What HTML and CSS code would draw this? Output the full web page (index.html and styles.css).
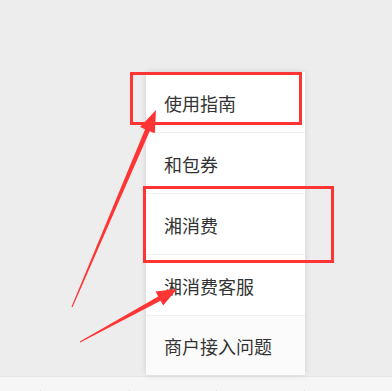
FILE: index.html
```html
<!DOCTYPE html>
<html>
<head>
    <meta charset="utf-8">
    <meta name="viewport" content="width=device-width, initial-scale=1.0">
    <title>菜单</title>
    <link rel="stylesheet" href="styles.css">
</head>
<body>
    <div class="page">
        <div class="main">
            <ul class="menu">
                <li>使用指南</li>
                <li>和包券</li>
                <li>湘消费</li>
                <li>湘消费客服</li>
                <li class="last">商户接入问题</li>
            </ul>
        </div>
        <div class="tabbar">
            <span class="tab first"></span>
            <span class="tab"></span>
            <span class="tab"></span>
            <span class="tab"></span>
        </div>

        <!-- 标注 -->
        <div class="mark mark-1"></div>
        <div class="mark mark-2"></div>
        <svg class="arrows" width="392" height="391" viewBox="0 0 392 391">
            <polygon fill="#ff3535" points="71.5,306.8 145.1,129.2 140,127.1 156,110 154.8,133.3 149.7,131.2 72.5,307.2"/>
            <polygon fill="#ff3535" points="79.8,341.6 158.2,296.4 155.6,291.6 177,289 163.2,305.6 160.6,300.8 80.2,342.4"/>
        </svg>
    </div>
</body>
</html>
```

FILE: styles.css
```css
html, body {
    margin: 0;
    padding: 0;
    background: #ededed;
    overflow: hidden;
}
.page {
    position: relative;
    width: 392px;
    height: 391px;
    overflow: hidden;
    font-family: "Noto Sans CJK SC", sans-serif;
}
.main {
    height: 376px;
    display: flex;
    flex-direction: column;
    justify-content: flex-end;
    padding-left: 146px;
    box-sizing: border-box;
}
.menu {
    list-style: none;
    margin: 0 0 1px 0;
    padding: 0;
    width: 159px;
    background: white;
    box-shadow: 0 0 6px rgba(0,0,0,0.13);
}
.menu li {
    height: 60px;
    line-height: 62px;
    padding-left: 18px;
    font-size: 18px;
    color: #333;
    border-bottom: 1px solid #f1f1f1;
}
.menu li.last {
    height: 59px;
    line-height: 60px;
    border-bottom: none;
    background: #fbfbfb;
}
.tabbar {
    height: 14px;
    background: #f6f6f6;
    border-top: 1px solid #e6e6e6;
    display: flex;
    padding-left: 40px;
}
.tab {
    width: 125px;
    margin-top: 13px;
    border-left: 1px solid #e3e3e3;
}
.tab.first {
    width: 126px;
}
.mark {
    position: absolute;
    border: 3px solid #ff3535;
    box-sizing: border-box;
}
.mark-1 {
    left: 130px;
    top: 72px;
    width: 172px;
    height: 53px;
}
.mark-2 {
    left: 143px;
    top: 186px;
    width: 191px;
    height: 77px;
}
.arrows {
    position: absolute;
    left: 0;
    top: 0;
}
```
